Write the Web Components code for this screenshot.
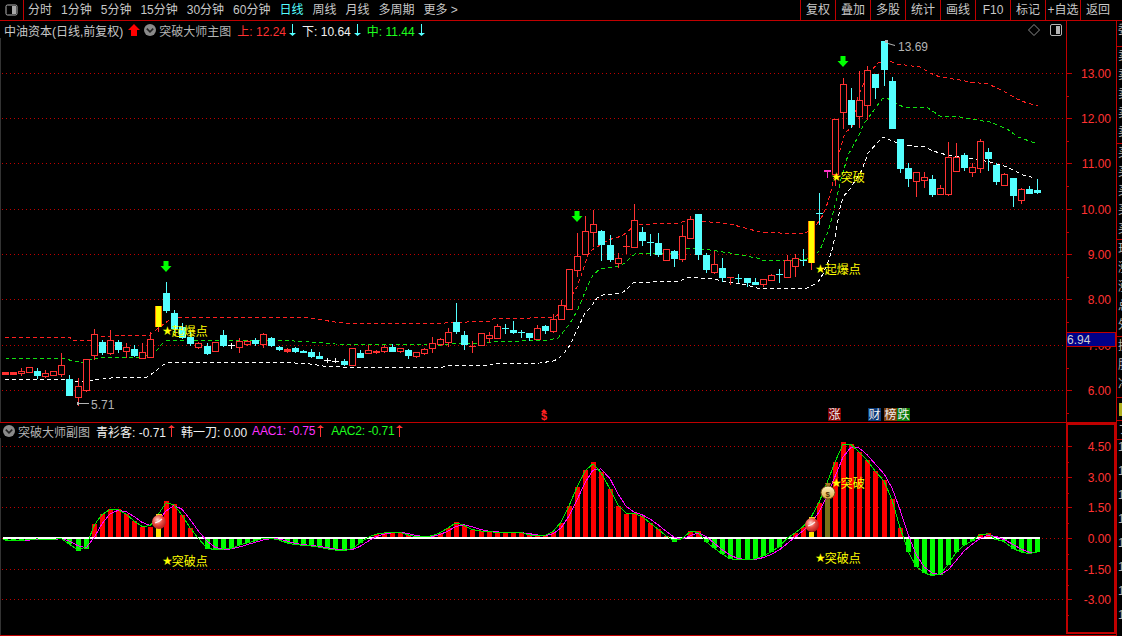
<!DOCTYPE html>
<html>
<head>
<meta charset="utf-8">
<title>突破大师</title>
<style>
  html, body { margin: 0; padding: 0; background: #000; overflow: hidden; }
  body { width: 1122px; height: 636px; font: 12px "Liberation Sans", "Noto Sans CJK SC", sans-serif; color: #c8c8c8; }
</style>
</head>
<body>
<quote-screen>
  <tool-bar slot="bar">
    <tool-item>分时</tool-item><tool-item>1分钟</tool-item><tool-item>5分钟</tool-item><tool-item>15分钟</tool-item>
    <tool-item>30分钟</tool-item><tool-item>60分钟</tool-item><tool-item active>日线</tool-item><tool-item>周线</tool-item>
    <tool-item>月线</tool-item><tool-item>多周期</tool-item><tool-item>更多&nbsp;&gt;</tool-item>
    <tool-cell slot="right">复权</tool-cell><tool-cell slot="right">叠加</tool-cell><tool-cell slot="right">多股</tool-cell>
    <tool-cell slot="right">统计</tool-cell><tool-cell slot="right">画线</tool-cell><tool-cell slot="right">F10</tool-cell>
    <tool-cell slot="right">标记</tool-cell><tool-cell slot="right">+自选</tool-cell><tool-cell slot="right">返回</tool-cell>
  </tool-bar>

  <chart-pane slot="panes" head="17" style="--pane-h:402px">
    <pane-head slot="head">
      <head-val label="中油资本(日线,前复权)" color="#c8c8c8"></head-val>
      <head-icon kind="up" style="margin-left:1px"></head-icon>
      <head-icon kind="menu"></head-icon>
      <head-val label="突破大师主图" color="#b4b4b4" style="margin-left:-1px"></head-val>
      <head-val label="上" value=": 12.24" color="#ff3232" arrow="down" style="margin-left:2px"></head-val>
      <head-val label="下" value=": 10.64" color="#f0f0f0" arrow="down" style="margin-left:1px"></head-val>
      <head-val label="中" value=": 11.44" color="#1eff1e" arrow="down" style="margin-left:1px"></head-val>
      <head-icon kind="diamond" style="margin-left:auto;margin-right:4px"></head-icon>
      <head-icon kind="split" style="margin-right:4px"></head-icon>
    </pane-head>
    <candle-chart slot="chart"></candle-chart>
    <axis-scale slot="axis" top="21" height="401" tag="6.94"
      marks='[["13.00",73],["12.00",118],["11.00",163],["10.00",209],["9.00",254],["8.00",299],["7.00",345],["6.00",390]]'></axis-scale>
  </chart-pane>

  <chart-pane slot="panes" head="15" style="--pane-h:213px">
    <pane-head slot="head" style="--pad:3px">
      <head-icon kind="menu"></head-icon>
      <head-val label="突破大师副图" color="#b4b4b4" style="margin-left:-1px"></head-val>
      <head-val label="青衫客" value=": -0.71" color="#f0f0f0" arrow="up" style="margin-left:2px"></head-val>
      <head-val label="韩一刀" value=": 0.00" color="#f0f0f0" style="margin-left:2px"></head-val>
      <head-val label="AAC1" value=": -0.75" color="#ff32ff" arrow="up" style="margin-left:1px;letter-spacing:-.2px"></head-val>
      <head-val label="AAC2" value=": -0.71" color="#1eff1e" arrow="up" style="margin-left:3px;letter-spacing:-.2px"></head-val>
    </pane-head>
    <osc-chart slot="chart"></osc-chart>
    <axis-scale slot="axis" top="423" height="212" boxed
      marks='[["4.50",446],["3.00",477],["1.50",507],["0.00",538],["-1.50",569],["-3.00",599]]'></axis-scale>
  </chart-pane>

  <side-strip slot="strip"></side-strip>
</quote-screen>

<script>
const RED = "#ff3232", CYAN = "#54ffff", GRID = "#c00000", LINE = "#c00000";
const stepX = (i) => Math.round(5 + 8.06 * i);

// [kind, wick top, body top, body bottom, wick bottom], kinds: r hollow red, f solid red,
// c solid cyan, w white cross, x cyan cross, R red cross, y signal bar, m magenta T
const BARS = [
  ["f",372,372,374,374],["f",372,372,374,374],["r",368,371,373,375],["r",367,367,372,372],["c",368,371,375,378],
  ["r",370,373,376,377],["r",371,371,375,375],["r",353,365,374,376],["c",375,379,395,395],["r",378,386,397,405],
  ["r",359,359,390,391],["r",329,334,355,359],["c",340,342,352,354],["r",330,340,353,354],["c",340,342,349,352],
  ["r",343,347,351,357],["c",345,349,355,356],["r",343,352,358,358],["r",332,339,357,357],["y",306,306,326,331],
  ["c",282,293,310,312],["c",310,313,328,332],["c",323,327,337,338],["c",332,337,343,345],["r",342,343,347,348],
  ["c",343,346,353,354],["r",342,342,351,351],["c",330,335,345,346],["w",343,345,345,348],["r",338,341,347,352],
  ["r",340,341,344,345],["c",338,340,343,345],["r",333,334,344,347],["c",337,338,345,346],["c",346,347,349,350],
  ["f",348,349,351,352],["c",347,348,351,352],["c",350,351,352,352],["c",349,352,356,357],["c",352,356,358,358],
  ["w",358,360,360,362],["w",358,361,361,362],["c",359,361,364,365],["r",348,348,365,365],["c",350,353,357,357],
  ["r",345,350,353,353],["f",350,351,352,353],["r",345,347,351,352],["c",344,347,351,351],["r",348,348,351,352],
  ["c",349,350,355,358],["r",352,352,356,357],["r",348,349,353,354],["r",337,343,348,352],["r",338,339,344,345],
  ["r",328,332,342,346],["c",303,322,331,333],["c",331,335,344,349],["R",341,346,346,352],["r",333,333,345,345],
  ["r",332,335,338,342],["r",324,326,338,338],["x",324,328,328,333],["c",321,330,332,333],["x",330,332,332,337],
  ["c",333,333,337,340],["r",325,328,339,339],["c",325,326,330,333],["r",314,319,331,332],["r",300,305,319,319],
  ["r",269,269,309,309],["r",233,256,270,276],["r",216,231,254,254],["r",210,224,232,246],["c",230,231,244,260],
  ["c",235,245,259,261],["r",253,258,263,267],["R",235,246,246,253],["r",204,220,247,247],["c",227,232,240,245],
  ["x",234,242,242,255],["c",233,243,254,256],["r",249,249,260,260],["c",250,251,258,266],["r",225,236,259,261],
  ["r",216,219,238,238],["c",214,214,254,259],["c",253,255,269,272],["r",251,264,272,273],["c",258,268,277,281],
  ["R",277,277,277,284],["x",274,278,278,282],["c",278,278,282,286],["c",278,282,284,284],["r",279,279,284,286],
  ["r",274,275,280,280],["x",269,274,274,282],["r",255,260,277,277],["r",254,258,266,276],["x",249,260,260,265],
  ["y",221,221,262,269],["x",193,213,213,224],["m",170,170,170,177],["r",119,119,174,185],["r",78,84,112,128],
  ["c",88,100,124,127],["r",71,100,116,127],["r",66,70,105,119],["c",74,74,87,98],["c",41,41,69,85],
  ["c",77,81,128,128],["c",139,139,168,172],["c",163,168,178,186],["r",172,172,181,196],["r",172,177,180,187],
  ["c",175,179,194,196],["r",185,188,194,194],["r",142,157,194,195],["r",143,157,171,171],["c",153,155,167,170],
  ["r",163,167,172,176],["r",139,141,168,172],["c",148,152,158,170],["c",163,165,181,184],["r",173,174,185,185],
  ["c",178,178,195,206],["r",188,189,200,203],["c",186,189,193,193],["c",179,190,192,193]
];

const UPPER = [[5,337],[70,337],[72,340],[90,341],[100,337],[120,335],[150,335],[152,333],[168,321],[172,317],[280,317],[310,318],[322,320],[335,322],[345,323],[445,323],[490,321],[493,319],[530,318],[545,317],[555,317],[563,311],[569,300],[577,287],[582,273],[588,255],[592,250],[608,240],[622,236],[626,233],[635,225],[653,224],[680,223],[687,220],[710,222],[730,224],[745,228],[760,232],[780,233],[805,233],[815,227],[823,215],[828,202],[832,187],[840,150],[845,133],[852,127],[858,97],[864,83],[872,70],[878,63],[887,60],[897,64],[920,67],[930,73],[940,77],[960,80],[970,82],[988,84],[997,88],[1007,93],[1017,99],[1027,103],[1038,106]];
const MIDDLE = [[5,358],[67,359],[72,361],[85,363],[90,360],[103,357],[143,357],[150,354],[157,350],[163,343],[168,340],[280,340],[323,343],[335,344],[427,345],[443,345],[450,344],[487,343],[493,342],[547,340],[553,339],[558,338],[565,330],[572,320],[578,309],[583,297],[588,285],[593,275],[600,269],[612,267],[618,266],[625,263],[630,258],[635,254],[650,253],[680,253],[688,248],[710,250],[730,253],[740,255],[757,258],[762,260],[787,261],[807,259],[815,255],[820,250],[825,238],[828,232],[833,213],[837,197],[840,183],[848,155],[858,137],[865,122],[872,113],[882,99],[887,98],[898,105],[905,107],[918,107],[928,108],[940,116],[960,117],[970,119],[990,122],[1007,129],[1018,137],[1035,143]];
const LOWER = [[5,379],[65,379],[77,382],[103,379],[120,377],[147,377],[153,373],[163,365],[168,363],[280,362],[310,364],[323,366],[340,367],[443,367],[447,366],[490,365],[493,364],[540,363],[553,361],[558,359],[565,352],[570,345],[578,328],[585,313],[590,308],[597,298],[603,295],[622,293],[628,288],[633,283],[653,282],[680,281],[688,277],[713,279],[727,282],[747,285],[757,288],[780,289],[807,288],[813,285],[818,282],[823,274],[828,262],[832,250],[835,237],[838,220],[840,208],[843,197],[850,189],[862,170],[868,153],[877,143],[883,137],[890,140],[903,145],[925,147],[933,151],[947,155],[963,157],[990,162],[1007,167],[1023,175],[1035,178]];

const OSC = [-2,-3,-3,-1,-1,-1,-2,1,-6,-13,-11,14,24,29,29,24,17,11,11,10,37,34,23,10,0,-11,-12,-11,-11,-7,-5,-3,0,0,-2,-5,-7,-7,-8,-9,-11,-12,-13,-11,-5,1,4,5,6,6,3,1,1,2,5,10,16,13,8,7,6,6,5,5,6,3,2,2,6,15,32,51,68,76,66,49,32,24,25,22,15,9,2,-4,-1,7,7,-4,-10,-16,-21,-22,-22,-21,-18,-14,-9,0,5,11,6,35,40,76,96,94,86,78,67,58,39,10,-14,-29,-35,-38,-37,-27,-14,-7,-3,4,5,-2,-3,-11,-14,-16,-14];

const points = (list) => list.map((p) => p.join(",")).join(" ");
const dotted = (ys, x2) => ys.map((y) => `<line x1="2" x2="${x2}" y1="${y + 0.5}" y2="${y + 0.5}" stroke="${GRID}" stroke-dasharray="1 3"/>`).join("");
const starLabel = (x, y, text) =>
  `<text x="${x}" y="${y + 4}" fill="#ffff00"><tspan style="font:12px 'DejaVu Sans'">★</tspan><tspan dx="-1" dy="1">${text}</tspan></text>`;
const greenArrow = (x, y) =>
  `<path d="M${x - 2.5} ${y}h5v5h3l-5.5 6l-5.5 -6h3z" fill="#00ff00"/>`;

function candle([kind, wt, bt, bb, wb], i) {
  const x = stepX(i);
  const wick = (c) => `<rect x="${x}" y="${wt}" width="1" height="${wb - wt + 1}" fill="${c}"/>`;
  const left = x - 3;
  switch (kind) {
    case "r":
      return wick(RED) + `<rect x="${left + 0.5}" y="${bt + 0.5}" width="6" height="${bb - bt}" fill="#000" stroke="${RED}"/>`;
    case "f":
      return wick(RED) + `<rect x="${left}" y="${bt}" width="7" height="${bb - bt + 1}" fill="${RED}"/>`;
    case "c":
      return wick(CYAN) + `<rect x="${left}" y="${bt}" width="7" height="${bb - bt + 1}" fill="${CYAN}"/>`;
    case "w":
      return wick("#fff") + `<rect x="${left}" y="${bt}" width="7" height="1" fill="#fff"/>`;
    case "x":
      return wick(CYAN) + `<rect x="${left}" y="${bt}" width="7" height="1" fill="${CYAN}"/>`;
    case "R":
      return wick(RED) + `<rect x="${left}" y="${bt}" width="7" height="1" fill="${RED}"/>`;
    case "m":
      return wick("#ff32c8") + `<rect x="${left}" y="${bt}" width="7" height="2" fill="#ff32c8"/>`;
    default:
      return wick(RED) + `<rect x="${left}" y="${bt}" width="7" height="${bb - bt + 1}" fill="#ffff00"/>` +
        `<rect x="${left}" y="${bt}" width="1" height="${bb - bt + 1}" fill="#ff8000"/>` +
        `<rect x="${left + 6}" y="${bt}" width="1" height="${bb - bt + 1}" fill="#ff8000"/>`;
  }
}

class QuoteScreen extends HTMLElement {
  constructor() {
    super();
    this.attachShadow({ mode: "open" }).innerHTML = `
      <style>
        :host { display: grid; grid-template: "bar bar" 21px "panes strip" 1fr / 1116px 6px; width: 1122px; height: 636px; background: #000; overflow: hidden; }
        .bar { grid-area: bar; }
        .panes { grid-area: panes; display: flex; flex-direction: column; }
        .strip { grid-area: strip; min-width: 0; }
      </style>
      <div class="bar"><slot name="bar"></slot></div>
      <div class="panes"><slot name="panes"></slot></div>
      <div class="strip"><slot name="strip"></slot></div>`;
  }
}

class ToolBar extends HTMLElement {
  constructor() {
    super();
    this.attachShadow({ mode: "open" }).innerHTML = `
      <style>
        :host { display: flex; height: 20px; border-bottom: 1px solid ${LINE}; justify-content: space-between; }
        .left { display: flex; align-items: center; gap: 9px; }
        .toggle { width: 24px; height: 20px; box-sizing: border-box; border-right: 1px solid ${LINE}; display: flex; align-items: center; justify-content: center; margin-right: -5px; }
        .right { display: flex; padding-right: 7px; }
      </style>
      <div class="left">
        <div class="toggle"><svg width="13" height="12" viewBox="0 0 13 12"><rect x="1" y="1" width="11" height="10" rx="1.5" fill="#000" stroke="#b4b4b4"/><rect x="7" y="2" width="4" height="8" fill="#a8a8a8"/></svg></div>
        <slot></slot>
      </div>
      <div class="right"><slot name="right"></slot></div>`;
  }
}

class ToolItem extends HTMLElement {
  constructor() {
    super();
    this.attachShadow({ mode: "open" }).innerHTML = `
      <style>
        :host { display: block; color: #c8c8c8; white-space: nowrap; line-height: 20px; }
        :host([active]) { color: ${CYAN}; }
      </style><slot></slot>`;
  }
}

class ToolCell extends HTMLElement {
  constructor() {
    super();
    this.attachShadow({ mode: "open" }).innerHTML = `
      <style>
        :host { display: block; width: 35px; box-sizing: border-box; height: 20px; line-height: 20px; text-align: center; border-left: 1px solid ${LINE}; color: #c8c8c8; white-space: nowrap; }
      </style><slot></slot>`;
  }
}

class ChartPane extends HTMLElement {
  constructor() {
    super();
    this.attachShadow({ mode: "open" }).innerHTML = `
      <style>
        :host { display: grid; grid-template-columns: 1066px 50px; height: var(--pane-h); box-sizing: border-box; border-bottom: 1px solid ${LINE}; }
        .plot { display: flex; flex-direction: column; min-height: 0; }
        .head { flex: none; }
        .body { flex: 1; min-height: 0; }
      </style>
      <div class="plot">
        <div class="head"><slot name="head"></slot></div>
        <div class="body"><slot name="chart"></slot></div>
      </div>
      <slot name="axis"></slot>`;
    this.shadowRoot.querySelector(".head").style.height = this.getAttribute("head") + "px";
  }
}

class PaneHead extends HTMLElement {
  constructor() {
    super();
    this.attachShadow({ mode: "open" }).innerHTML = `
      <style>
        :host { display: flex; align-items: center; gap: 4px; height: 100%; padding: 1px 0 0 var(--pad, 4px); box-sizing: border-box; white-space: nowrap; }
      </style><slot></slot>`;
  }
}

class HeadVal extends HTMLElement {
  constructor() {
    super();
    const color = this.getAttribute("color");
    const arrow = this.getAttribute("arrow");
    const glyph = arrow === "down"
      ? `<svg width="9" height="12" viewBox="0 0 9 12"><path d="M4 0h1v9h3l-3.5 3l-3.5 -3h3z" fill="${CYAN}"/></svg>`
      : arrow === "up"
        ? `<svg width="7" height="12" viewBox="0 0 7 12"><path d="M3 12h1v-9h3l-3.5 -3l-3.5 3h3z" fill="${RED}"/></svg>`
        : "";
    this.attachShadow({ mode: "open" }).innerHTML = `
      <style>
        :host { display: inline-flex; align-items: center; gap: 2px; color: ${color}; }
        svg { display: block; }
      </style>
      <span>${this.getAttribute("label")}${this.getAttribute("value") || ""}</span>${glyph}`;
  }
}

class HeadIcon extends HTMLElement {
  constructor() {
    super();
    const icons = {
      up: `<path d="M6 0l6 6h-3v6h-6v-6h-3z" fill="#ff0000"/>`,
      menu: `<circle cx="6" cy="6" r="6" fill="#8a8a8a"/><path d="M2.8 4.6L6 7.8L9.2 4.6" fill="none" stroke="#222" stroke-width="1.6"/>`,
      diamond: `<path d="M4 .5L9.5 6L4 11.5L-1.5 6z" fill="none" stroke="#8c8c8c"/>`,
      split: `<rect x=".5" y=".5" width="11" height="11" rx="1.5" fill="none" stroke="#b4b4b4"/><rect x="6" y="2" width="4" height="8" fill="#b4b4b4"/>`
    };
    this.attachShadow({ mode: "open" }).innerHTML = `
      <style>:host { display: block; width: 12px; height: 12px; } svg { display: block; overflow: visible; }</style>
      <svg width="12" height="12" viewBox="0 0 12 12">${icons[this.getAttribute("kind")]}</svg>`;
  }
}

class CandleChart extends HTMLElement {
  constructor() {
    super();
    const tags = [[828, "涨", "#800000"], [868, "财", "#0a3a78"], [884, "榜", "#7a3c0a"], [897, "跌", "#0a7a0a"]];
    this.attachShadow({ mode: "open" }).innerHTML = `
      <style>
        :host { display: block; height: 384px; }
        svg { display: block; }
        text { font: 12px "Liberation Sans", "Noto Sans CJK SC", sans-serif; }
        .shapes { shape-rendering: crispEdges; }
      </style>
      <svg width="1066" height="384" viewBox="0 38 1066 384">
        <g class="shapes">
          <rect x="0" y="38" width="1" height="384" fill="#333"/>
          ${dotted([73, 118, 163, 209, 254, 299, 345, 390], 1066)}
          <polyline points="${points(UPPER)}" fill="none" stroke="#ff2020" stroke-dasharray="4 3"/>
          <polyline points="${points(MIDDLE)}" fill="none" stroke="#10e010" stroke-dasharray="4 3"/>
          <polyline points="${points(LOWER)}" fill="none" stroke="#ffffff" stroke-dasharray="4 3"/>
          ${BARS.map(candle).join("")}
        </g>
        ${greenArrow(166, 261)}${greenArrow(577, 211)}${greenArrow(843, 56)}
        ${starLabel(162, 331, "起爆点")}${starLabel(815, 269, "起爆点")}${starLabel(831, 177, "突破")}
        <g fill="#b4b4b4" stroke="none">
          <path d="M77 402h2v1h10v1h-10v1h-2z"/>
          <text x="91" y="409">5.71</text>
          <path d="M885 40h3v3h-3zM888 43l7 2v1l-7 -2z"/>
          <text x="898" y="51">13.69</text>
        </g>
        <path d="M544 409l3 3h-6z" fill="#ff2020"/>
        <text x="541" y="420" fill="#ff2020" style="font-size:11px;font-weight:bold">$</text>
        ${tags.map(([x, t, c]) => `<rect x="${x}" y="408" width="13" height="13" fill="${c}"/><text x="${x + 0.5}" y="419" fill="#f0f0f0">${t}</text>`).join("")}
      </svg>`;
  }
}

class OscChart extends HTMLElement {
  constructor() {
    super();
    const zero = 538;
    const base = OSC.slice();
    base[19] = 23; base[100] = 20; base[102] = 55;
    const green = base.map((v, i) => 0.1 * (base[i - 1] ?? v) + 0.8 * v + 0.1 * (base[i + 1] ?? v));
    const pink = green.map((v, i) => 0.45 * v + 0.4 * (green[i - 1] ?? v) + 0.15 * (green[i - 2] ?? v));
    const path = (vals) => vals.map((v, i) => `${stepX(i)},${(zero - v).toFixed(1)}`).join(" ");
    const bars = OSC.map((v, i) => {
      const x = stepX(i) - 2;
      if (!v) return "";
      if (i === 19 || i === 100) return `<rect x="${x}" y="${zero - v}" width="5" height="${v}" fill="#ffe000"/>`;
      if (i === 102) return `<rect x="${x}" y="498" width="5" height="40" fill="#7a7018"/>`;
      return v > 0
        ? `<rect x="${x}" y="${zero - v}" width="5" height="${v}" fill="#ff0000"/>`
        : `<rect x="${x}" y="${zero}" width="5" height="${-v}" fill="#00ff00"/>`;
    }).join("");
    const ball = (x, y) => `
      <rect x="${x - 3}" y="${y - 8}" width="6" height="2" fill="#f0d020"/>
      <circle cx="${x}" cy="${y}" r="7" fill="url(#ball)"/>
      <path d="M${x - 4} ${y + 1}q4 -1 7 -4" fill="none" stroke="#fff" stroke-width="1.2" opacity=".85"/>`;
    this.attachShadow({ mode: "open" }).innerHTML = `
      <style>
        :host { display: block; height: 197px; }
        svg { display: block; }
        text { font: 12px "Liberation Sans", "Noto Sans CJK SC", sans-serif; }
        .shapes { shape-rendering: crispEdges; }
      </style>
      <svg width="1066" height="197" viewBox="0 438 1066 197">
        <defs>
          <radialGradient id="ball" cx=".4" cy=".35" r=".7"><stop offset="0" stop-color="#ffd8d0"/><stop offset=".5" stop-color="#e84a40"/><stop offset="1" stop-color="#a81818"/></radialGradient>
          <linearGradient id="bag" x1="0" x2="0" y1="0" y2="1"><stop offset="0" stop-color="#fff4c0"/><stop offset="1" stop-color="#d8a840"/></linearGradient>
        </defs>
        <g class="shapes">
          <rect x="0" y="438" width="1" height="197" fill="#333"/>
          ${dotted([446, 477, 507, 538, 569, 599], 1066)}
          ${bars}
          <rect x="3" y="537" width="1037" height="2" fill="#fff"/>
        </g>
        <g class="shapes">
          <polyline points="${path(pink)}" fill="none" stroke="#ff00ff"/>
          <polyline points="${path(green)}" fill="none" stroke="#00e800"/>
        </g>
        ${ball(159, 522)}${ball(812, 525)}
        <g>
          <path d="M825 483h6l-1.5 3.5h-3z" fill="#a87820"/>
          <ellipse cx="828" cy="492.5" rx="7" ry="6.5" fill="url(#bag)" stroke="#705010"/>
          <text x="825.4" y="496.5" fill="#503000" style="font-size:8px;font-weight:bold">$</text>
        </g>
        ${starLabel(162, 561, "突破点")}${starLabel(815, 558, "突破点")}${starLabel(831, 483, "突破")}
      </svg>`;
  }
}

class AxisScale extends HTMLElement {
  constructor() {
    super();
    const top = +this.getAttribute("top");
    const h = +this.getAttribute("height");
    const marks = JSON.parse(this.getAttribute("marks"));
    const boxed = this.hasAttribute("boxed");
    const tag = this.getAttribute("tag");
    const gap = marks[1][1] - marks[0][1];
    const ticks = marks.map(([, y]) =>
      `<rect x="1066" y="${y}" width="6" height="1" fill="${LINE}"/><rect x="1066" y="${y + Math.round(gap / 2)}" width="3" height="1" fill="${LINE}"/>`).join("");
    const labels = marks.map(([t, y]) => `<text x="1111" y="${y + 5}" text-anchor="end" fill="${RED}">${t}</text>`).join("");
    const frame = boxed
      ? `<rect x="1066" y="${top}" width="2" height="${h - 1}" fill="${LINE}"/><rect x="1114" y="${top}" width="2" height="${h - 1}" fill="${LINE}"/><rect x="1066" y="${top}" width="50" height="2" fill="${LINE}"/><rect x="1066" y="${top + h - 3}" width="50" height="2" fill="${LINE}"/>`
      : `<rect x="1066" y="${top}" width="1" height="${h}" fill="${LINE}"/>`;
    const badge = tag
      ? `<rect x="1066.5" y="332.5" width="49" height="14" fill="#000088" stroke="${LINE}" shape-rendering="crispEdges"/><text x="1067" y="344" fill="#d0d0d0">${tag}</text>`
      : "";
    this.attachShadow({ mode: "open" }).innerHTML = `
      <style>
        :host { display: block; }
        svg { display: block; }
        text { font: 12px "Liberation Sans", "Noto Sans CJK SC", sans-serif; }
      </style>
      <svg width="50" height="${h}" viewBox="1066 ${top} 50 ${h}">
        <g shape-rendering="crispEdges">${frame}${ticks}</g>${labels}${badge}
      </svg>`;
  }
}

class SideStrip extends HTMLElement {
  constructor() {
    super();
    const groups = [
      [26, ["委比"]],
      [97, ["卖五", "卖四", "卖三", "卖二", "卖一"]],
      [96, ["买一", "买二", "买三", "买四", "买五"]],
      [97, ["现价", "涨跌", "涨幅", "总量", "外盘"]],
      [61, ["换手", "股本", "净资"]],
      [23, []],
      [19, ["フ"]],
      [193, ["14", "14", "14", "14", "14", "14", "14", "14"]]
    ];
    const html = groups.map(([h, rows], i) => `
      <section style="height:${h}px" class="${i === 5 ? "flag" : i === 7 ? "ticks" : ""}">
        ${i === 5 ? "<i></i>" : rows.map((r) => `<div>${r}</div>`).join("")}
      </section>`).join("");
    this.attachShadow({ mode: "open" }).innerHTML = `
      <style>
        :host { display: block; height: 615px; box-sizing: border-box; border-left: 1px solid ${LINE}; overflow: hidden; color: #b0b0b0; white-space: nowrap; }
        section { box-sizing: border-box; border-bottom: 1px solid ${LINE}; padding-left: 1px; overflow: hidden; }
        section div { height: 19px; line-height: 19px; }
        .ticks { border-bottom: 0; }
        .ticks div { height: 24px; line-height: 24px; position: relative; top: -5px; }
        .flag { padding: 5px 0 0 2px; }
        i { display: block; width: 3px; height: 13px; background: #b0b020; }
      </style>${html}`;
  }
}

customElements.define("quote-screen", QuoteScreen);
customElements.define("tool-bar", ToolBar);
customElements.define("tool-item", ToolItem);
customElements.define("tool-cell", ToolCell);
customElements.define("chart-pane", ChartPane);
customElements.define("pane-head", PaneHead);
customElements.define("head-val", HeadVal);
customElements.define("head-icon", HeadIcon);
customElements.define("candle-chart", CandleChart);
customElements.define("osc-chart", OscChart);
customElements.define("axis-scale", AxisScale);
customElements.define("side-strip", SideStrip);
</script>
</body>
</html>
